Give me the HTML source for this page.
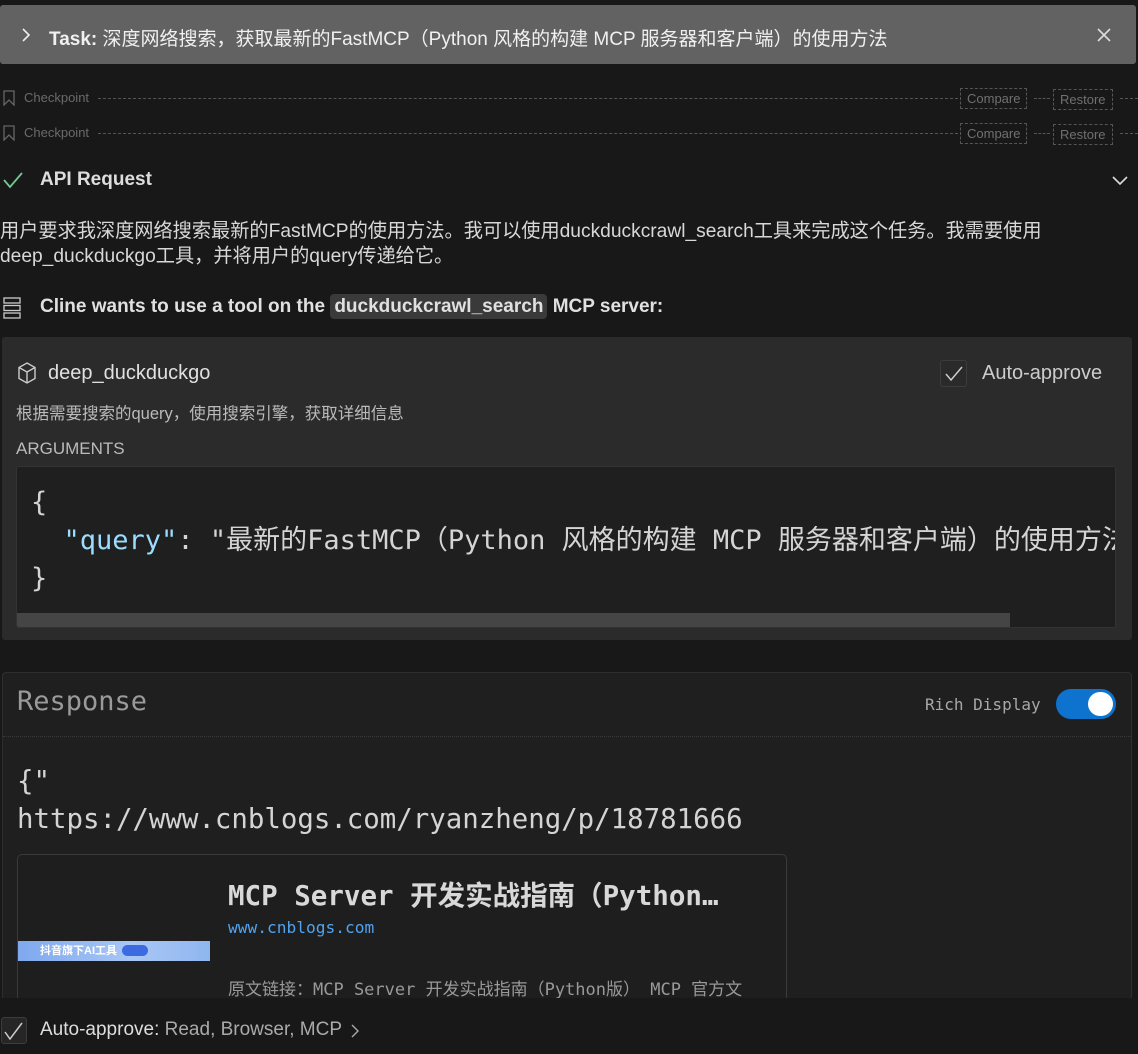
<!DOCTYPE html>
<html><head><meta charset="utf-8"><style>
*{box-sizing:border-box;margin:0;padding:0}
html,body{width:1138px;height:1054px;overflow:hidden}
body{background:#181818;color:#cccccc;font-family:"Liberation Sans","Noto Sans CJK SC",sans-serif;position:relative}
.abs{position:absolute}
.mono{font-family:"DejaVu Sans Mono","Noto Sans CJK SC",monospace}
.cp{font-size:13px;color:#6a6a6a;display:flex;align-items:center}
.dash{position:absolute;border-top:1px dashed #555;height:0}
.btn{position:absolute;border:1px dashed #555;color:#707070;font-size:13px;padding:1px 6px;line-height:17px}
</style></head><body>
<div class="abs" style="left:0;top:5px;width:1136px;height:59px;background:#626262;border-radius:3px"></div>
<svg class="abs" style="left:21px;top:27px" width="10" height="16" viewBox="0 0 10 16"><path d="M2 2l6 6-6 6" stroke="#eee" stroke-width="1.6" fill="none"/></svg>
<div class="abs" style="left:49px;top:24px;font-size:19px;color:#f0f0f0;white-space:nowrap"><b>Task:</b> 深度网络搜索，获取最新的FastMCP（Python 风格的构建 MCP 服务器和客户端）的使用方法</div>
<svg class="abs" style="left:1097px;top:28px" width="14" height="14" viewBox="0 0 14 14"><path d="M1 1l12 12M13 1L1 13" stroke="#ddd" stroke-width="1.6"/></svg>

<svg class="abs" style="left:3px;top:90px" width="12" height="16" viewBox="0 0 12 16"><path d="M1 1h10v14l-5-5-5 5z" stroke="#666" fill="none" stroke-width="1.3"/></svg>
<div class="abs cp" style="left:24px;top:90px">Checkpoint</div>
<div class="dash" style="left:98px;top:98px;width:860px"></div>
<div class="btn" style="left:960px;top:88px">Compare</div>
<div class="dash" style="left:1034px;top:98px;width:16px"></div>
<div class="btn" style="left:1053px;top:89px">Restore</div>
<div class="dash" style="left:1120px;top:98px;width:18px"></div>

<svg class="abs" style="left:3px;top:125px" width="12" height="16" viewBox="0 0 12 16"><path d="M1 1h10v14l-5-5-5 5z" stroke="#666" fill="none" stroke-width="1.3"/></svg>
<div class="abs cp" style="left:24px;top:125px">Checkpoint</div>
<div class="dash" style="left:98px;top:133px;width:860px"></div>
<div class="btn" style="left:960px;top:123px">Compare</div>
<div class="dash" style="left:1034px;top:133px;width:16px"></div>
<div class="btn" style="left:1053px;top:124px">Restore</div>
<div class="dash" style="left:1120px;top:133px;width:18px"></div>

<svg class="abs" style="left:2px;top:170px" width="22" height="20" viewBox="0 0 22 20"><path d="M2 10l6 7L20 3" stroke="#73c991" stroke-width="1.8" fill="none"/></svg>
<div class="abs" style="left:40px;top:169px;font-size:19px;font-weight:bold;color:#dddddd">API Request</div>
<svg class="abs" style="left:1111px;top:174px" width="18" height="12" viewBox="0 0 18 12"><path d="M2 3l7 7 7-7" stroke="#ddd" stroke-width="1.6" fill="none"/></svg>

<div class="abs" style="left:0;top:219px;font-size:19.2px;line-height:25px;color:#d8d8d8;width:1120px">用户要求我深度网络搜索最新的FastMCP的使用方法。我可以使用duckduckcrawl_search工具来完成这个任务。我需要使用<br>deep_duckduckgo工具，并将用户的query传递给它。</div>

<svg class="abs" style="left:3px;top:297px" width="18" height="22" viewBox="0 0 18 22"><g stroke="#ccc" fill="none" stroke-width="1.3"><rect x="1" y="1" width="16" height="5"/><rect x="1" y="8.5" width="16" height="5"/><rect x="1" y="16" width="16" height="5"/></g></svg>
<div class="abs" style="left:40px;top:296px;font-size:19px;font-weight:bold;color:#e0e0e0;white-space:nowrap">Cline wants to use a tool on the <span style="background:#3a3a3a;border-radius:4px;padding:2px 4px">duckduckcrawl_search</span> MCP server:</div>

<div class="abs" style="left:2px;top:337px;width:1130px;height:303px;background:#2b2b2b;border-radius:3px"></div>
<svg class="abs" style="left:17px;top:362px" width="20" height="22" viewBox="0 0 20 22"><g stroke="#ccc" fill="none" stroke-width="1.4"><path d="M10 1l8 4.5v11L10 21l-8-4.5v-11z"/><path d="M2 5.5L10 10l8-4.5M10 10v11"/></g></svg>
<div class="abs" style="left:48px;top:362px;font-size:20px;color:#e0e0e0">deep_duckduckgo</div>
<div class="abs" style="left:940px;top:360px;width:27px;height:27px;border:1px solid #3c3c3c;background:#2a2a2a;border-radius:3px"></div>
<svg class="abs" style="left:943px;top:364px" width="22" height="20" viewBox="0 0 22 20"><path d="M3 10l5 6L19 3" stroke="#ccc" stroke-width="1.5" fill="none"/></svg>
<div class="abs" style="left:982px;top:362px;font-size:20px;color:#cccccc">Auto-approve</div>
<div class="abs" style="left:16px;top:400px;font-size:16.5px;color:#bbbbbb">根据需要搜索的query，使用搜索引擎，获取详细信息</div>
<div class="abs" style="left:16px;top:439px;font-size:17px;color:#bbbbbb">ARGUMENTS</div>

<div class="abs" style="left:16px;top:466px;width:1100px;height:162px;background:#1f1f1f;border:1px solid #333;border-radius:3px;overflow:hidden">
<div class="mono" style="position:absolute;left:14px;top:17px;font-size:27px;line-height:38px;color:#d4d4d4;white-space:pre">{
  <span style="color:#9cdcfe">"query"</span>: "最新的FastMCP（Python 风格的构建 MCP 服务器和客户端）的使用方法"
}</div>
<div style="position:absolute;left:0;top:146px;width:993px;height:16px;background:#454545"></div>
</div>

<div class="abs" style="left:2px;top:672px;width:1130px;height:382px;background:#1f1f1f;border:1px solid #2e2e2e;border-bottom:none;border-radius:4px 4px 0 0"></div>
<div class="abs mono" style="left:17px;top:686px;font-size:27px;color:#9a9a9a">Response</div>
<div class="abs mono" style="left:925px;top:695px;font-size:16px;color:#a8a8a8">Rich Display</div>
<div class="abs" style="left:1056px;top:689px;width:60px;height:30px;background:#0e73cf;border-radius:15px"></div>
<div class="abs" style="left:1088px;top:692px;width:25px;height:24px;background:#fff;border-radius:12px"></div>
<div class="abs" style="left:3px;top:736px;width:1128px;border-top:1px dotted #3a3a3a"></div>
<div class="abs mono" style="left:17px;top:763px;font-size:27.4px;line-height:38px;color:#d4d4d4;white-space:pre">{"
https://www.cnblogs.com/ryanzheng/p/18781666</div>

<div class="abs" style="left:17px;top:854px;width:770px;height:200px;background:#1e1e1e;border:1px solid #3a3a3a;border-radius:5px"></div>
<div class="abs" style="left:18px;top:941px;width:192px;height:20px;background:linear-gradient(90deg,#7fa8ee,#a9c7f5 60%,#8fb6f0)"></div>
<div class="abs" style="left:40px;top:942px;font-size:11px;font-weight:bold;color:#fff">抖音旗下AI工具</div>
<div class="abs" style="left:122px;top:945px;width:26px;height:11px;background:#3c6ae0;border-radius:6px"></div>
<div class="abs mono" style="left:228px;top:873px;font-size:27.5px;font-weight:bold;color:#d8d8d8;white-space:nowrap">MCP Server 开发实战指南（Python…</div>
<div class="abs mono" style="left:228px;top:918px;font-size:16.2px;color:#4fa3f0">www.cnblogs.com</div>
<div class="abs mono" style="left:228px;top:975px;font-size:17px;color:#999;white-space:nowrap">原文链接：MCP Server 开发实战指南（Python版） MCP 官方文</div>

<div class="abs" style="left:0;top:998px;width:1138px;height:56px;background:#181818"></div>
<div class="abs" style="left:1px;top:1017px;width:26px;height:27px;border:1px solid #3c3c3c;background:#262626;border-radius:3px"></div>
<svg class="abs" style="left:3px;top:1020px" width="22" height="22" viewBox="0 0 22 22"><path d="M2 12l5 7L19 3" stroke="#ccc" stroke-width="1.5" fill="none"/></svg>
<div class="abs" style="left:40px;top:1019px;font-size:19px;color:#dddddd">Auto-approve: <span style="color:#aaaaaa">Read, Browser, MCP</span></div>
<svg class="abs" style="left:350px;top:1023px" width="10" height="16" viewBox="0 0 10 16"><path d="M2 2l6 6-6 6" stroke="#aaa" stroke-width="1.4" fill="none"/></svg>
</body></html>
